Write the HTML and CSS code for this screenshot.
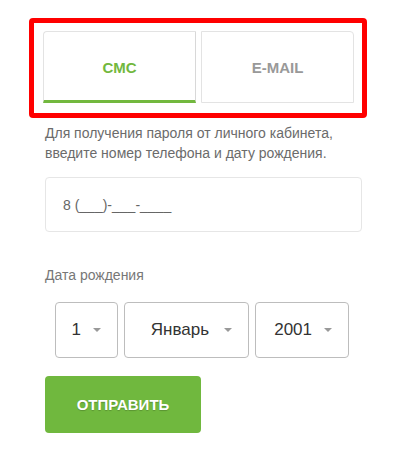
FILE: index.html
```html
<!DOCTYPE html>
<html lang="ru">
<head>
  <meta charset="UTF-8">
  <meta name="viewport" content="width=device-width, initial-scale=1.0">
  <title>Восстановление пароля</title>
  <link rel="stylesheet" href="styles.css">
</head>
<body>
  <div class="page">
    <div class="highlight">
      <div class="tabs">
        <button class="tab active">СМС</button>
        <button class="tab">E-MAIL</button>
      </div>
    </div>

    <form class="restore-form">
      <p class="hint">Для получения пароля от личного кабинета, введите номер телефона и дату рождения.</p>

      <div class="phone-field">8 (___)-___-____</div>

      <label class="field-label">Дата рождения</label>
      <div class="date-row">
        <div class="select select-day">1 <span class="caret"></span></div>
        <div class="select select-month">Январь <span class="caret"></span></div>
        <div class="select select-year">2001 <span class="caret"></span></div>
      </div>

      <button type="submit" class="submit-btn">Отправить</button>
    </form>
  </div>
</body>
</html>
```

FILE: styles.css
```css
* {
  box-sizing: border-box;
  margin: 0;
  padding: 0;
}

body {
  font-family: "Liberation Sans", Arial, sans-serif;
  background-color: #fff;
  color: #666;
}

.page {
  padding: 18px 0 0 0;
}

.highlight {
  margin-left: 29px;
  width: 338px;
  height: 100px;
  border: 5px solid #ff0000;
  border-radius: 4px;
  padding: 8px 0 0 9px;
}

.tabs {
  display: flex;
  gap: 5px;
}

.tab {
  width: 153px;
  height: 72px;
  background: #fff;
  border: 1px solid #e3e3e3;
  font-family: inherit;
  font-size: 15px;
  font-weight: bold;
  color: #999;
  cursor: pointer;
}

.tab:first-child {
  border-radius: 4px 0 0 0;
  border-right-color: #d8d8d8;
}

.tab:last-child {
  border-radius: 0 4px 0 0;
}

.tab.active {
  color: #72b83e;
  border-bottom: 3px solid #72b83e;
  padding-top: 2px;
}

.restore-form {
  padding: 5px 0 0 45px;
}

.hint {
  width: 320px;
  font-size: 14px;
  line-height: 20px;
  color: #6b6b6b;
}

.phone-field {
  margin-top: 14px;
  width: 317px;
  height: 55px;
  border: 1px solid #e6e6e6;
  border-radius: 4px;
  padding-left: 17px;
  display: flex;
  align-items: center;
  font-size: 14px;
  color: #666;
}

.field-label {
  display: block;
  margin-top: 33px;
  font-size: 14px;
  line-height: 20px;
  color: #777;
}

.date-row {
  display: flex;
  gap: 6px;
  margin: 17px 0 0 10px;
}

.select {
  height: 56px;
  border: 1px solid #bdbdbd;
  border-radius: 4px;
  display: flex;
  align-items: center;
  justify-content: flex-end;
  gap: 12px;
  padding-right: 16px;
  font-size: 17px;
  color: #333;
}

.select-day {
  width: 63px;
}

.select-month {
  width: 125px;
  gap: 15px;
}

.select-year {
  width: 94px;
}

.caret {
  width: 0;
  height: 0;
  border-left: 4px solid transparent;
  border-right: 4px solid transparent;
  border-top: 4px solid #999;
}

.submit-btn {
  display: block;
  margin-top: 18px;
  width: 156px;
  height: 57px;
  background-color: #70b83e;
  border: none;
  border-radius: 4px;
  color: #fff;
  font-family: inherit;
  font-size: 15px;
  font-weight: bold;
  text-transform: uppercase;
  text-shadow: 0 1px 1px rgba(0, 0, 0, 0.2);
  cursor: pointer;
}
```
